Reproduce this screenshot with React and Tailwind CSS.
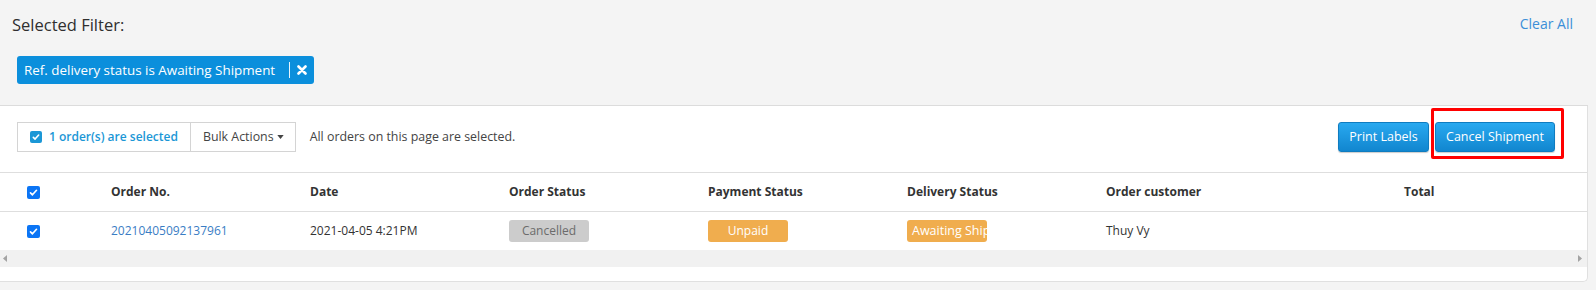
import React from 'react';

const checkSvg = (
  <svg viewBox="0 0 12 12" className="w-[9px] h-[9px]" fill="none" stroke="white" strokeWidth="2.2" strokeLinecap="round" strokeLinejoin="round">
    <path d="M2 6.5l2.6 2.6L10 3" />
  </svg>
);

function TableCheck() {
  return (
    <span className="w-[13px] h-[13px] rounded-[2px] bg-[#0b75f5] flex items-center justify-center">
      {checkSvg}
    </span>
  );
}

function Pill({ children, className }) {
  return (
    <span className={`inline-flex items-center h-[22px] w-[80px] rounded-[3px] overflow-hidden whitespace-nowrap ${className}`}>
      {children}
    </span>
  );
}

const columns = [
  { label: 'Order No.', width: 'w-[199px]' },
  { label: 'Date', width: 'w-[199px]' },
  { label: 'Order Status', width: 'w-[199px]' },
  { label: 'Payment Status', width: 'w-[199px]' },
  { label: 'Delivery Status', width: 'w-[199px]' },
  { label: 'Order customer', width: 'w-[298px]' },
  { label: 'Total', width: 'flex-1' },
];

export default function App() {
  return (
    <div className="w-[1596px] h-[290px] bg-[#f4f4f4] text-[#333] overflow-hidden" style={{ fontFamily: '"Open Sans", "Liberation Sans", sans-serif' }}>
      <div className="w-[1588px]">
        {/* filter section */}
        <div className="h-[106px] border-b border-[#dcdcdc] pl-[12px] pr-[15px] pt-[12px]">
          <div className="flex items-start justify-between">
            <div className="text-[16.5px] leading-[26px] text-[#2f2f2f]">Selected Filter:</div>
            <a className="text-[14px] leading-[24px] text-[#3b8fd8] cursor-pointer">Clear All</a>
          </div>
          <div className="mt-[18px] ml-[5px]">
            <span className="inline-flex items-center h-[28px] rounded-[3px] bg-[#0b8fdc] text-white text-[13.4px] pl-[7px] pr-[7px]">
              <span>Ref. delivery status is Awaiting Shipment</span>
              <span className="ml-[14px] w-px h-[16px] bg-white/90"></span>
              <svg viewBox="0 0 10 10" className="ml-[7px] w-[10px] h-[10px]" stroke="white" strokeWidth="2.6" strokeLinecap="round">
                <path d="M1.5 1.5l7 7M8.5 1.5l-7 7" />
              </svg>
            </span>
          </div>
        </div>

        {/* card */}
        <div className="h-[176px] bg-white border-r border-b border-[#e0e0e0] rounded-br-[5px]">
          <div className="h-[66px] flex items-start justify-between pl-[17px] pr-[32px] pt-[16px]">
            <div className="flex items-center">
              <div className="flex h-[30px] border border-[#d4d4d4] bg-white">
                <div className="flex items-center pl-[12px] pr-[12px] gap-[7px] border-r border-[#d4d4d4]">
                  <span className="w-[12px] h-[12px] rounded-[2px] bg-[#1b97d6] flex items-center justify-center">
                    <svg viewBox="0 0 12 12" className="w-[8px] h-[8px]" fill="none" stroke="white" strokeWidth="2.4" strokeLinecap="round" strokeLinejoin="round">
                      <path d="M2 6.5l2.6 2.6L10 3" />
                    </svg>
                  </span>
                  <span className="text-[12px] font-semibold text-[#1b97d6]">1 order(s) are selected</span>
                </div>
                <div className="flex items-center pl-[12px] pr-[11px] text-[12.4px] text-[#444]">
                  Bulk Actions
                  <svg viewBox="0 0 8 5" className="ml-[3px] w-[7px] h-[4px]" fill="#444">
                    <path d="M0 0h8L4 5z" />
                  </svg>
                </div>
              </div>
              <span className="ml-[14px] text-[12.4px] text-[#444]">All orders on this page are selected.</span>
            </div>
            <div className="flex items-center gap-[6px] relative">
              <button className="h-[30px] w-[91px] rounded-[3px] border border-[#0f7cc0] bg-gradient-to-b from-[#28a9f0] to-[#1186cf] text-white text-[12.5px] shadow-[0_1px_1px_rgba(0,0,0,0.2)]">Print Labels</button>
              <button className="h-[30px] w-[120px] rounded-[3px] border border-[#0f7cc0] bg-gradient-to-b from-[#28a9f0] to-[#1186cf] text-white text-[12.5px] shadow-[0_1px_1px_rgba(0,0,0,0.2)]">Cancel Shipment</button>
              <span className="absolute left-[93px] -top-[14px] w-[133px] h-[51px] border-[3px] border-[#ff0000] rounded-[2px] pointer-events-none"></span>
            </div>
          </div>

          {/* table */}
          <div className="border-t border-[#dedede]">
            <div className="flex items-center h-[39px] border-b border-[#dedede] text-[12px] font-bold text-[#333]">
              <div className="w-[99px] pl-[27px] flex items-center"><TableCheck /></div>
              {columns.map((c) => (
                <div key={c.label} className={`${c.width} pl-[12px]`}>{c.label}</div>
              ))}
            </div>
            <div className="flex items-center h-[38px] text-[12px] text-[#333]">
              <div className="w-[99px] pl-[27px] flex items-center"><TableCheck /></div>
              <div className="w-[199px] pl-[12px] text-[#3a7dc4]">20210405092137961</div>
              <div className="w-[199px] pl-[12px]">2021-04-05 4:21PM</div>
              <div className="w-[199px] pl-[12px]">
                <Pill className="bg-[#cccccc] text-[#6b6b6b] text-[12px] justify-center">Cancelled</Pill>
              </div>
              <div className="w-[199px] pl-[12px]">
                <Pill className="bg-[#f0ad4e] text-white text-[12px] justify-center">Unpaid</Pill>
              </div>
              <div className="w-[199px] pl-[12px]">
                <Pill className="bg-[#f0ad4e] text-white text-[12.5px] pl-[5px]">Awaiting Shipment</Pill>
              </div>
              <div className="w-[298px] pl-[12px]">Thuy Vy</div>
              <div className="flex-1"></div>
            </div>
            {/* horizontal scrollbar */}
            <div className="h-[17px] bg-[#f1f1f1] flex items-center justify-between pl-[3px] pr-[5px]">
              <svg viewBox="0 0 4 7" className="w-[4px] h-[7px]" fill="#a3a3a3"><path d="M4 0v7L0 3.5z" /></svg>
              <svg viewBox="0 0 4 7" className="w-[4px] h-[7px]" fill="#a3a3a3"><path d="M0 0v7l4-3.5z" /></svg>
            </div>
          </div>
        </div>
      </div>
    </div>
  );
}
